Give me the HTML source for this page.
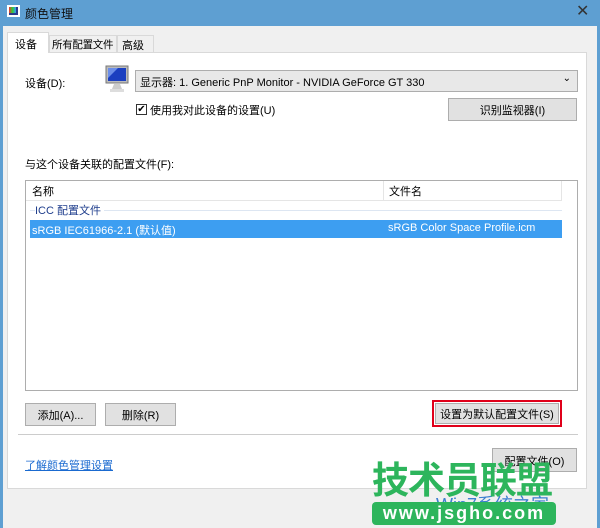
<!DOCTYPE html><html><head><meta charset="utf-8"><style>
*{margin:0;padding:0;box-sizing:border-box}
body{width:600px;height:528px;overflow:hidden;background:#f0f0f0;font-family:"Liberation Sans","Noto Sans CJK SC",sans-serif;font-size:11px;color:#000;position:relative}
.a{position:absolute;white-space:nowrap}
.btn{position:absolute;background:#e1e1e1;border:1px solid #adadad;text-align:center;font-size:11px;white-space:nowrap}
</style></head><body>
<div class="a" style="left:0;top:0;width:600px;height:26px;background:#5e9fd2"></div>
<div class="a" style="left:0;top:0;width:3px;height:528px;background:#5e9fd2"></div>
<div class="a" style="right:0;top:0;width:3px;height:528px;background:#5e9fd2"></div>
<div class="a" style="left:7px;top:5px;width:13px;height:12px;background:#2a3a8a;border:2px solid #fff"></div>
<div class="a" style="left:9px;top:7px;width:7px;height:6px;background:linear-gradient(90deg,#e33,#3c3,#39f)"></div>
<div class="a" style="left:25px;top:5px;color:#111;font-size:12px">颜色管理</div>
<div class="a" style="left:576px;top:1px;font-size:16px;color:#333">✕</div>
<div class="a" style="left:7px;top:52px;width:580px;height:437px;background:#fff;border:1px solid #d9d9d9"></div>
<div class="a" style="left:7px;top:32px;width:42px;height:21px;background:#fff;border:1px solid #d9d9d9;border-bottom:none;padding:3px 0 0 7px">设备</div>
<div class="a" style="left:49px;top:35px;width:68px;height:17px;background:#f0f0f0;border:1px solid #d9d9d9;border-bottom:none;padding:1px 0 0 2px;font-size:10.5px;letter-spacing:-0.3px">所有配置文件</div>
<div class="a" style="left:117px;top:35px;width:37px;height:17px;background:#f0f0f0;border:1px solid #d9d9d9;border-bottom:none;padding:1px 0 0 4px">高级</div>
<div class="a" style="left:25px;top:75px">设备(D):</div>
<svg class="a" style="left:104px;top:64px" width="26" height="30"><rect x="2" y="2" width="22" height="17" fill="#bbb" stroke="#777"/><rect x="4" y="4" width="18" height="13" fill="#1b3fc0"/><path d="M4 4h10l-10 10z" fill="#6c8ee8"/><path d="M10 20h6l2 5h-10z" fill="#ccc"/><rect x="6" y="25" width="14" height="3" fill="#ddd"/></svg>
<div class="a" style="left:135px;top:70px;width:443px;height:22px;background:#e8e8e8;border:1px solid #adadad;padding:3px 0 0 4px">显示器: 1. Generic PnP Monitor - NVIDIA GeForce GT 330<span class="a" style="right:6px;top:2px;font-size:10px">⌄</span></div>
<div class="a" style="left:136px;top:104px;width:11px;height:11px;border:1px solid #333;background:#fff;font-size:10px;line-height:9px;text-align:center">✔</div>
<div class="a" style="left:150px;top:102px">使用我对此设备的设置(U)</div>
<div class="btn" style="left:448px;top:98px;width:129px;height:23px;padding-top:3px">识别监视器(I)</div>
<div class="a" style="left:25px;top:156px">与这个设备关联的配置文件(F):</div>
<div class="a" style="left:25px;top:180px;width:553px;height:211px;background:#fff;border:1px solid #adadad"></div>
<div class="a" style="left:26px;top:181px;width:536px;height:20px;border-bottom:1px solid #e5e5e5"></div>
<div class="a" style="left:383px;top:181px;width:1px;height:20px;background:#e5e5e5"></div>
<div class="a" style="left:561px;top:181px;width:1px;height:20px;background:#e5e5e5"></div>
<div class="a" style="left:32px;top:183px">名称</div>
<div class="a" style="left:389px;top:183px">文件名</div>
<div class="a" style="left:30px;top:210px;width:532px;height:1px;background:#dde6f2"></div>
<div class="a" style="left:35px;top:202px;background:#fff;color:#1e3d8c;padding-right:3px">ICC 配置文件</div>
<div class="a" style="left:30px;top:220px;width:532px;height:18px;background:#3d9ef1;color:#fff;padding:2px 0 0 2px">sRGB IEC61966-2.1 (默认值)<span class="a" style="left:358px;top:2px">sRGB Color Space Profile.icm</span></div>
<div class="btn" style="left:25px;top:403px;width:71px;height:23px;padding-top:3px">添加(A)...</div>
<div class="btn" style="left:105px;top:403px;width:71px;height:23px;padding-top:3px">删除(R)</div>
<div class="a" style="left:432px;top:400px;width:130px;height:27px;border:2px solid #e0001a"></div>
<div class="btn" style="left:435px;top:403px;width:124px;height:21px;padding-top:2px">设置为默认配置文件(S)</div>
<div class="a" style="left:18px;top:434px;width:560px;height:1px;background:#ccc"></div>
<div class="a" style="left:25px;top:457px;color:#1a6ad0;text-decoration:underline">了解颜色管理设置</div>
<div class="btn" style="left:492px;top:448px;width:85px;height:24px;padding-top:4px">配置文件(O)</div>
<div class="a" style="left:436px;top:491px;color:#3c7fd0;font-size:18px">Win7系统之家</div>
<div class="a" style="left:372px;top:458px;color:#2db55c;font-size:37px;font-weight:bold;letter-spacing:-1px;line-height:46px">技术员联盟</div>
<div class="a" style="left:372px;top:502px;width:184px;height:23px;background:#2db55c;border-radius:4px;color:#fff;font-size:18px;font-weight:bold;letter-spacing:2px;text-align:center;line-height:23px">www.jsgho.com</div>
</body></html>
